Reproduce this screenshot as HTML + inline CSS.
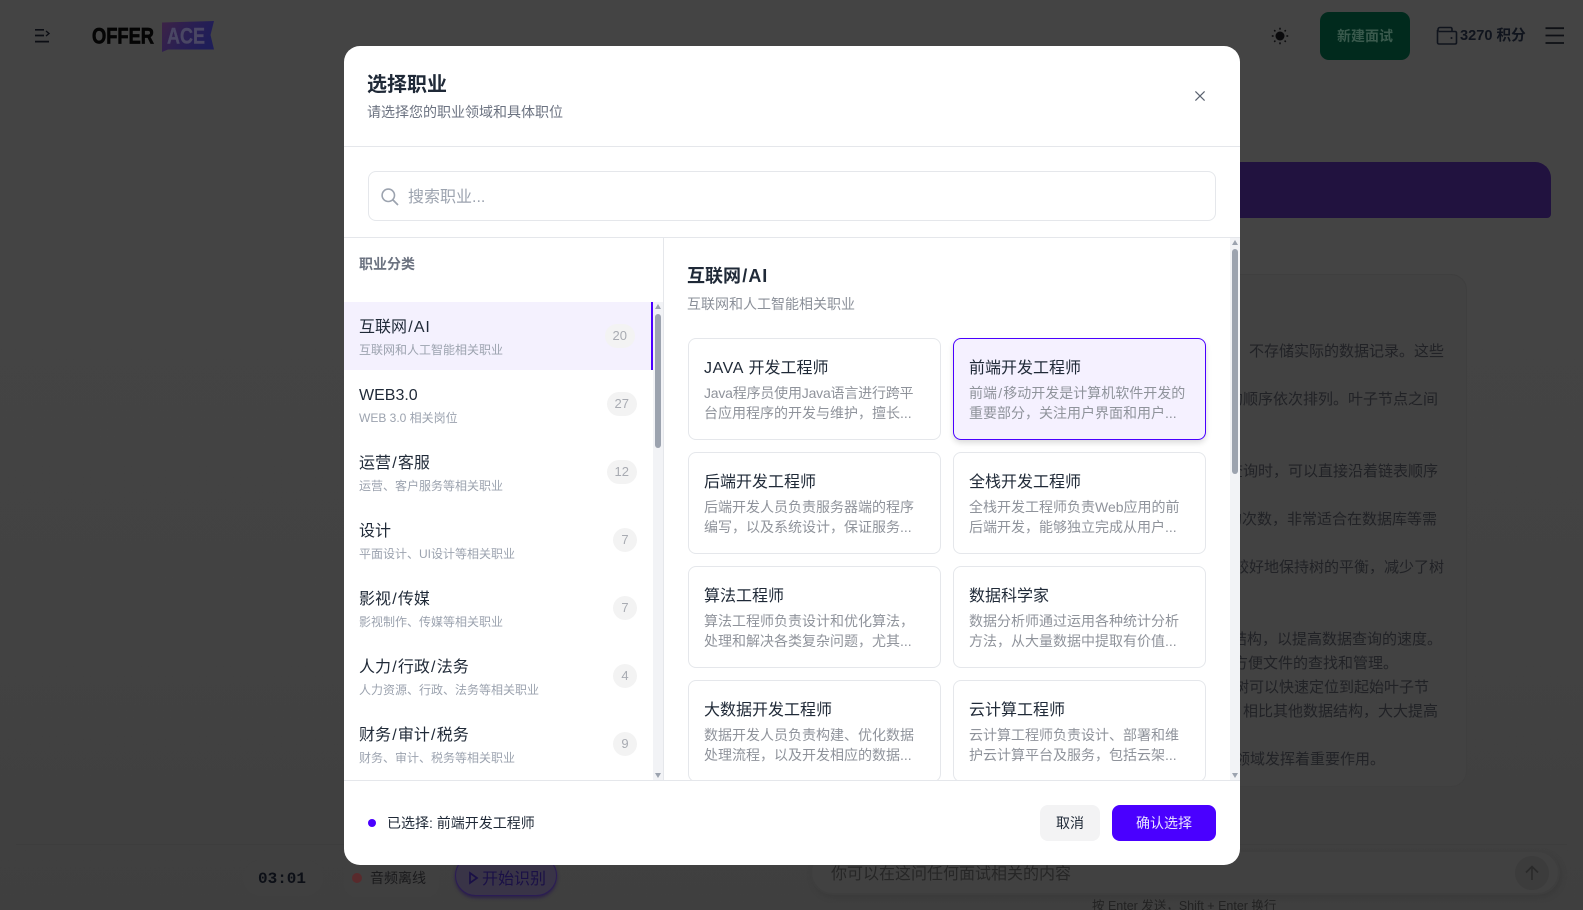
<!DOCTYPE html>
<html lang="zh-CN">
<head>
<meta charset="utf-8">
<title>选择职业</title>
<style>
*{box-sizing:border-box;margin:0;padding:0}
html,body{width:1583px;height:910px;overflow:hidden}
body{position:relative;font-family:"Liberation Sans","Noto Sans CJK SC",sans-serif;background:linear-gradient(#444444,#444444 30%,#424242 70%,#3f3f3f)}
.a{position:absolute;white-space:nowrap}
.bgt{font-size:15px;line-height:24px;color:#212226;height:24px}
#modal{position:absolute;left:344px;top:46px;width:896px;height:819px;background:#fff;border-radius:16px;overflow:hidden}
#modal .a{line-height:1}
.hl{position:absolute;background:#e5e7eb}
.list{position:absolute;left:0;top:256px;width:309px;height:478px;overflow:hidden}
.item{position:absolute;left:0;width:309px;height:68px}
.item.on{background:#f4f1fe;border-right:2px solid #4a00ff}
.item b{position:absolute;left:15px;top:14px;font-weight:400;font-size:16px;line-height:24px;color:#1f2937;white-space:nowrap}
.item i{position:absolute;left:15px;top:40px;font-style:normal;font-size:12px;line-height:16px;color:#9ca3af;white-space:nowrap}
.badge{position:absolute;right:16px;top:22px;height:24px;min-width:24px;padding:0 8px;border-radius:12px;background:#f3f3f3;color:#a8abb2;font-size:13px;line-height:24px;text-align:center}
.badge.s{padding:0}
.sb{position:absolute;background:#f2f3f6}
.th{position:absolute;background:#9ca3af;border-radius:3px}
.tri{position:absolute;width:0;height:0;border-left:3.5px solid transparent;border-right:3.5px solid transparent}
.up{border-bottom:5px solid #9ca3af}
.dn{border-top:5px solid #9ca3af}
.pane{position:absolute;left:320px;top:192px;width:566px;height:542px;overflow:hidden}
.card{position:absolute;width:253px;height:102px;border:1px solid #e5e7eb;border-radius:8px;background:#fff;padding:16px 15px;white-space:nowrap}
.card.on{border-color:#4a00ff;background:#f5f1ff;box-shadow:0 3px 6px rgba(0,0,0,.14)}
.card b{display:block;position:relative;top:2px;font-weight:400;font-size:16px;line-height:24px;color:#1f2937}
.card span{display:block;font-size:14px;line-height:20px;color:#8f939b}
.card b+span{margin-top:4px}
.btn{display:flex;align-items:center;justify-content:center}
u{text-decoration:none;margin:0 1.2px}
em{font-style:normal;letter-spacing:.8px}
</style>
</head>
<body>
<!-- background header -->
<svg class="a" style="left:0;top:0" width="230" height="60" viewBox="0 0 230 60">
  <g stroke="#0c0e14" stroke-width="1.7" fill="none">
    <path d="M35 29.8H44M35 35.5H44M35 41.6H49"/>
    <path d="M46 31L49 33.5L46 36" stroke-width="1.4"/>
  </g>
  <text x="92" y="43.5" font-family="Liberation Sans" font-weight="700" font-size="22" fill="#050505" stroke="#050505" stroke-width=".7" textLength="62" lengthAdjust="spacingAndGlyphs">OFFER</text>
  <defs><linearGradient id="fl" x1="0" y1="0" x2="1" y2="0.4"><stop offset="0" stop-color="#3d2346"/><stop offset=".55" stop-color="#2a1f52"/><stop offset="1" stop-color="#1f1e58"/></linearGradient></defs>
  <path d="M162 22.5L214 21L210.5 35L214 49.5H168L162 52Z" fill="url(#fl)"/>
  <text x="167" y="43.5" font-family="Liberation Sans" font-weight="700" font-size="22" fill="#4a4764" stroke="#4a4764" stroke-width=".4" textLength="38" lengthAdjust="spacingAndGlyphs">ACE</text>
</svg>
<svg class="a" style="left:1270px;top:26px" width="20" height="20" viewBox="0 0 20 20">
  <circle cx="10" cy="10" r="4.5" fill="#0a0a0c"/>
  <path d="M10 1.8V3.6M10 16.4V18.2M1.8 10H3.6M16.4 10H18.2M4.2 4.2L5.4 5.4M14.6 14.6L15.8 15.8M4.2 15.8L5.4 14.6M14.6 5.4L15.8 4.2" stroke="#0a0a0c" stroke-width="1.5"/>
</svg>
<div class="a" style="left:1320px;top:12px;width:90px;height:48px;border-radius:9px;background:#012a1d;color:#3a5a4d;font-size:14px;font-weight:700;line-height:48px;text-align:center">新建面试</div>
<svg class="a" style="left:1436px;top:26px" width="22" height="20" viewBox="0 0 22 20">
  <path d="M2 5V3.5C2 2.5 2.7 1.5 3.8 1.5H14.5C15.5 1.5 16 2.3 16 3.2V5.5M1.5 4V16.5C1.5 17.5 2.3 18 3 18H19C20 18 20.5 17.3 20.5 16.5V7C20.5 6 19.8 5.5 19 5.5H2.5" fill="none" stroke="#10141d" stroke-width="1.6"/>
  <circle cx="15.5" cy="12" r="1" fill="#10141d"/>
</svg>
<div class="a" style="left:1460px;top:25px;font-size:14.6px;font-weight:700;line-height:22px;color:#10141d">3270 积分</div>
<svg class="a" style="left:1544px;top:26px" width="22" height="20" viewBox="0 0 22 20">
  <path d="M1.5 2.2H20M1.5 9.5H20M1.5 17H20" stroke="#0e1015" stroke-width="1.8"/>
</svg>
<div class="a" style="left:1100px;top:162px;width:451px;height:56px;background:#21123f;border-radius:0 16px 4px 0"></div>

<!-- background answer card -->
<div class="a" style="left:1000px;top:274px;width:467px;height:513px;background:#424242;border:1px solid #3f3f3f;border-radius:16px"></div>
<div class="a bgt" style="right:139px;top:340px">不存储实际的数据记录。这些</div>
<div class="a bgt" style="right:145px;top:388px">的顺序依次排列。叶子节点之间</div>
<div class="a bgt" style="right:145px;top:460px">查询时，可以直接沿着链表顺序</div>
<div class="a bgt" style="right:146px;top:508px">的次数，非常适合在数据库等需</div>
<div class="a bgt" style="right:139px;top:556px">较好地保持树的平衡，减少了树</div>
<div class="a bgt" style="right:141px;top:628px">结构，以提高数据查询的速度。</div>
<div class="a bgt" style="right:185px;top:652px">方便文件的查找和管理。</div>
<div class="a bgt" style="right:154px;top:676px">树可以快速定位到起始叶子节</div>
<div class="a bgt" style="right:145px;top:700px">相比其他数据结构，大大提高</div>
<div class="a bgt" style="right:198px;top:748px">领域发挥着重要作用。</div>

<!-- background bottom bar -->
<div class="a" style="left:16px;top:844px;width:1551px;height:1px;background:#3d3d3d"></div>
<div class="a" style="left:243px;top:860px;width:80px;height:36px;border-radius:18px;background:#404040"></div>
<div class="a" style="left:258px;top:869px;font-family:'Liberation Mono','DejaVu Sans Mono',monospace;font-weight:700;font-size:16px;line-height:20px;color:#0c0f16">03:01</div>
<div class="a" style="left:344px;top:860px;width:95px;height:37px;border-radius:12px;background:#404040"></div>
<div class="a" style="left:352px;top:873px;width:10px;height:10px;border-radius:50%;background:#582a2c"></div>
<div class="a" style="left:370px;top:868px;font-size:14px;line-height:20px;color:#1a1a1c">音频离线</div>
<div class="a" style="left:455px;top:855px;width:102px;height:41px;border-radius:21px;background:#393447;border:1px solid #2b1c55;box-shadow:0 2px 3px #2c2148"></div>
<svg class="a" style="left:468px;top:871px" width="11" height="14" viewBox="0 0 11 14"><path d="M2 2L9 7L2 12Z" fill="none" stroke="#1a1046" stroke-width="1.7"/></svg>
<div class="a" style="left:482px;top:868px;font-size:16px;line-height:24px;color:#1a1046">开始识别</div>
<div class="a" style="left:810px;top:850px;width:750px;height:45px;border-radius:23px;background:#414141;border:2px solid #3e3e3e;box-shadow:2px 3px 4px #3b3b3b"></div>
<div class="a" style="left:831px;top:863px;font-size:16px;line-height:24px;color:#262626">你可以在这问任何面试相关的内容</div>
<div class="a" style="left:1515px;top:856px;width:34px;height:34px;border-radius:50%;background:#3c3c3c"></div>
<svg class="a" style="left:1523px;top:864px" width="18" height="18" viewBox="0 0 18 18"><path d="M9 16V3M3 8.5L9 2.5L15 8.5" fill="none" stroke="#2a2a2a" stroke-width="1.6"/></svg>
<div class="a" style="left:1092px;top:898px;font-size:12.5px;line-height:16px;color:#222">按 Enter 发送，Shift + Enter 换行</div>

<!-- modal -->
<div id="modal">
  <div class="a" style="left:23px;top:27px;font-size:20px;font-weight:700;line-height:24px!important;color:#1f2937">选择职业</div>
  <div class="a" style="left:23px;top:59px;font-size:14px;color:#6b7280">请选择您的职业领域和具体职位</div>
  <svg class="a" style="left:848px;top:44px" width="16" height="12" viewBox="0 0 16 12"><path d="M3.4 1.4L12.6 10.6M12.6 1.4L3.4 10.6" stroke="#5b6370" stroke-width="1.2"/></svg>
  <div class="hl" style="left:0;top:100px;width:896px;height:1px"></div>

  <div class="a" style="left:24px;top:125px;width:848px;height:50px;border:1px solid #e5e7eb;border-radius:8px"></div>
  <svg class="a" style="left:36px;top:141px" width="20" height="20" viewBox="0 0 20 20"><circle cx="8.3" cy="8.3" r="6.2" fill="none" stroke="#9ca3af" stroke-width="1.6"/><path d="M12.9 12.9L18 18" stroke="#9ca3af" stroke-width="1.7"/></svg>
  <div class="a" style="left:64px;top:144px;font-size:16px;color:#9ca3af">搜索职业...</div>
  <div class="hl" style="left:0;top:191px;width:896px;height:1px"></div>

  <!-- left column -->
  <div class="hl" style="left:319px;top:192px;width:1px;height:542px"></div>
  <div class="a" style="left:15px;top:211px;font-size:14px;font-weight:700;color:#6b7280">职业分类</div>
  <div class="list">
    <div class="item on" style="top:0"><b>互联网<u>/</u><em>AI</em></b><i>互联网和人工智能相关职业</i><span class="badge">20</span></div>
    <div class="item" style="top:68px"><b>WEB3.0</b><i>WEB 3.0 相关岗位</i><span class="badge">27</span></div>
    <div class="item" style="top:136px"><b>运营<u>/</u>客服</b><i>运营、客户服务等相关职业</i><span class="badge">12</span></div>
    <div class="item" style="top:204px"><b>设计</b><i>平面设计、UI设计等相关职业</i><span class="badge s">7</span></div>
    <div class="item" style="top:272px"><b>影视<u>/</u>传媒</b><i>影视制作、传媒等相关职业</i><span class="badge s">7</span></div>
    <div class="item" style="top:340px"><b>人力<u>/</u>行政<u>/</u>法务</b><i>人力资源、行政、法务等相关职业</i><span class="badge s">4</span></div>
    <div class="item" style="top:408px"><b>财务<u>/</u>审计<u>/</u>税务</b><i>财务、审计、税务等相关职业</i><span class="badge s">9</span></div>
  </div>
  <div class="sb" style="left:309px;top:256px;width:10px;height:478px"></div>
  <div class="tri up" style="left:310.5px;top:258px"></div>
  <div class="th" style="left:311px;top:268px;width:6px;height:134px"></div>
  <div class="tri dn" style="left:310.5px;top:727px"></div>

  <!-- right pane -->
  <div class="pane">
    <div class="a" style="left:23px;top:27px;font-size:18px;font-weight:700;line-height:22px;color:#1f2937">互联网<u>/</u><em>AI</em></div>
    <div class="a" style="left:23px;top:56px;font-size:14px;line-height:20px;color:#8b9099">互联网和人工智能相关职业</div>
    <div class="card" style="left:24px;top:100px"><b><em style="letter-spacing:.6px">JAVA</em> 开发工程师</b><span style="letter-spacing:-.2px">Java程序员使用Java语言进行跨平</span><span>台应用程序的开发与维护，擅长...</span></div>
    <div class="card on" style="left:289px;top:100px"><b>前端开发工程师</b><span>前端<u>/</u>移动开发是计算机软件开发的</span><span>重要部分，关注用户界面和用户...</span></div>
    <div class="card" style="left:24px;top:214px"><b>后端开发工程师</b><span>后端开发人员负责服务器端的程序</span><span>编写，以及系统设计，保证服务...</span></div>
    <div class="card" style="left:289px;top:214px"><b>全栈开发工程师</b><span>全栈开发工程师负责Web应用的前</span><span>后端开发，能够独立完成从用户...</span></div>
    <div class="card" style="left:24px;top:328px"><b>算法工程师</b><span>算法工程师负责设计和优化算法，</span><span>处理和解决各类复杂问题，尤其...</span></div>
    <div class="card" style="left:289px;top:328px"><b>数据科学家</b><span>数据分析师通过运用各种统计分析</span><span>方法，从大量数据中提取有价值...</span></div>
    <div class="card" style="left:24px;top:442px"><b>大数据开发工程师</b><span>数据开发人员负责构建、优化数据</span><span>处理流程，以及开发相应的数据...</span></div>
    <div class="card" style="left:289px;top:442px"><b>云计算工程师</b><span>云计算工程师负责设计、部署和维</span><span>护云计算平台及服务，包括云架...</span></div>
  </div>
  <div class="sb" style="left:886px;top:192px;width:10px;height:542px"></div>
  <div class="tri up" style="left:887.5px;top:194px"></div>
  <div class="th" style="left:888px;top:203px;width:6px;height:225px"></div>
  <div class="tri dn" style="left:887.5px;top:727px"></div>

  <!-- footer -->
  <div class="hl" style="left:0;top:734px;width:896px;height:1px"></div>
  <div class="a" style="left:24px;top:773px;width:8px;height:8px;border-radius:50%;background:#4a00ff"></div>
  <div class="a" style="left:43px;top:770px;font-size:14px;color:#1f2937">已选择: 前端开发工程师</div>
  <div class="a btn" style="left:696px;top:759px;width:60px;height:36px;border-radius:8px;background:#f3f3f4;color:#1f2937;font-size:14px">取消</div>
  <div class="a btn" style="left:768px;top:759px;width:104px;height:36px;border-radius:8px;background:#4a00ff;color:#e8e4ff;font-size:14px">确认选择</div>
</div>
</body>
</html>
